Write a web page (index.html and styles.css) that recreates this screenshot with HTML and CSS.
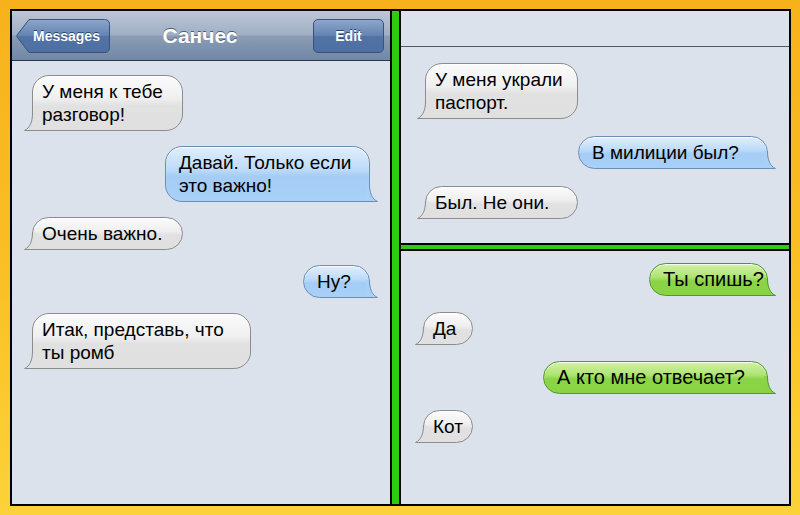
FILE: index.html
```html
<!DOCTYPE html>
<html lang="ru">
<head>
<meta charset="utf-8">
<title>Санчес</title>
<link rel="stylesheet" href="styles.css">
</head>
<body>
<svg class="defs" width="0" height="0" aria-hidden="true">
  <defs>
    <linearGradient id="btnGrad" x1="0" y1="0" x2="0" y2="1">
      <stop offset="0" stop-color="#8ea6c9"/>
      <stop offset="0.5" stop-color="#6283b2"/>
      <stop offset="0.5" stop-color="#5173a6"/>
      <stop offset="1" stop-color="#4d6fa2"/>
    </linearGradient>
  </defs>
</svg>
<div class="frame">
  <section class="phone phone-left">
    <header class="navbar">
      <a class="back-btn">
        <svg class="back-shape" width="94" height="34" viewBox="0 0 94 34"><path d="M13 0.5 H88.5 Q93.5 0.5 93.5 5.5 V28.5 Q93.5 33.5 88.5 33.5 H13 L1.3 18.3 Q0.5 17 1.3 15.7 Z" fill="url(#btnGrad)" stroke="#37527c" stroke-width="1"/></svg>
        <span class="btn-label">Messages</span>
      </a>
      <h1 class="nav-title">Санчес</h1>
      <a class="edit-btn">Edit</a>
    </header>
    <div class="thread thread-left">
      <div class="bubble in gray w151"><span class="txt">У меня к тебе<br>разговор!</span><svg class="tail" viewBox="0 0 12 22"><path class="tf" d="M8.5 4 C8.5 13 6 19 0.5 21.8 L12 22 L12 4 Z"/><path class="ts" d="M8.5 4 C8.5 13 6 19 0.5 21.5 L12 21.5"/></svg></div>
      <div class="bubble out blue w205"><span class="txt">Давай. Только если<br>это важно!</span><svg class="tail" viewBox="0 0 12 22"><path class="tf" d="M8.5 4 C8.5 13 6 19 0.5 21.8 L12 22 L12 4 Z"/><path class="ts" d="M8.5 4 C8.5 13 6 19 0.5 21.5 L12 21.5"/></svg></div>
      <div class="bubble in gray w151"><span class="txt">Очень важно.</span><svg class="tail" viewBox="0 0 12 22"><path class="tf" d="M8.5 4 C8.5 13 6 19 0.5 21.8 L12 22 L12 4 Z"/><path class="ts" d="M8.5 4 C8.5 13 6 19 0.5 21.5 L12 21.5"/></svg></div>
      <div class="bubble out blue w67"><span class="txt">Ну?</span><svg class="tail" viewBox="0 0 12 22"><path class="tf" d="M8.5 4 C8.5 13 6 19 0.5 21.8 L12 22 L12 4 Z"/><path class="ts" d="M8.5 4 C8.5 13 6 19 0.5 21.5 L12 21.5"/></svg></div>
      <div class="bubble in gray w219"><span class="txt">Итак, представь, что<br>ты ромб</span><svg class="tail" viewBox="0 0 12 22"><path class="tf" d="M8.5 4 C8.5 13 6 19 0.5 21.8 L12 22 L12 4 Z"/><path class="ts" d="M8.5 4 C8.5 13 6 19 0.5 21.5 L12 21.5"/></svg></div>
    </div>
  </section>
  <div class="right-col">
    <section class="phone phone-rt">
      <div class="blank-bar"></div>
      <div class="thread thread-rt">
        <div class="bubble in gray w153"><span class="txt">У меня украли<br>паспорт.</span><svg class="tail" viewBox="0 0 12 22"><path class="tf" d="M8.5 4 C8.5 13 6 19 0.5 21.8 L12 22 L12 4 Z"/><path class="ts" d="M8.5 4 C8.5 13 6 19 0.5 21.5 L12 21.5"/></svg></div>
        <div class="bubble out blue w190"><span class="txt">В милиции был?</span><svg class="tail" viewBox="0 0 12 22"><path class="tf" d="M8.5 4 C8.5 13 6 19 0.5 21.8 L12 22 L12 4 Z"/><path class="ts" d="M8.5 4 C8.5 13 6 19 0.5 21.5 L12 21.5"/></svg></div>
        <div class="bubble in gray w153"><span class="txt">Был. Не они.</span><svg class="tail" viewBox="0 0 12 22"><path class="tf" d="M8.5 4 C8.5 13 6 19 0.5 21.8 L12 22 L12 4 Z"/><path class="ts" d="M8.5 4 C8.5 13 6 19 0.5 21.5 L12 21.5"/></svg></div>
      </div>
    </section>
    <section class="phone phone-rb">
      <div class="thread thread-rb">
        <div class="bubble out green w119"><span class="txt">Ты спишь?</span><svg class="tail" viewBox="0 0 12 22"><path class="tf" d="M8.5 4 C8.5 13 6 19 0.5 21.8 L12 22 L12 4 Z"/><path class="ts" d="M8.5 4 C8.5 13 6 19 0.5 21.5 L12 21.5"/></svg></div>
        <div class="bubble in gray w50"><span class="txt">Да</span><svg class="tail" viewBox="0 0 12 22"><path class="tf" d="M8.5 4 C8.5 13 6 19 0.5 21.8 L12 22 L12 4 Z"/><path class="ts" d="M8.5 4 C8.5 13 6 19 0.5 21.5 L12 21.5"/></svg></div>
        <div class="bubble out green w225"><span class="txt">А кто мне отвечает?</span><svg class="tail" viewBox="0 0 12 22"><path class="tf" d="M8.5 4 C8.5 13 6 19 0.5 21.8 L12 22 L12 4 Z"/><path class="ts" d="M8.5 4 C8.5 13 6 19 0.5 21.5 L12 21.5"/></svg></div>
        <div class="bubble in gray w50"><span class="txt">Кот</span><svg class="tail" viewBox="0 0 12 22"><path class="tf" d="M8.5 4 C8.5 13 6 19 0.5 21.8 L12 22 L12 4 Z"/><path class="ts" d="M8.5 4 C8.5 13 6 19 0.5 21.5 L12 21.5"/></svg></div>
      </div>
    </section>
  </div>
</div>
</body>
</html>
```

FILE: styles.css
```css
html, body {
  margin: 0;
}

body {
  width: 800px;
  height: 515px;
  overflow: hidden;
  padding-top: 9px;
  box-sizing: border-box;
  background: linear-gradient(180deg, #f7b21b 0%, #f9bd22 45%, #fbc92d 75%, #fcd23a 100%);
  font-family: "Liberation Sans", Arial, sans-serif;
}

.defs {
  position: absolute;
  width: 0;
  height: 0;
}

.frame {
  box-sizing: border-box;
  margin-left: 10px;
  width: 781px;
  height: 497px;
  border: 2px solid #000;
  background: #2fcb12;
  display: flex;
  gap: 7px;
}

.phone {
  background: #dbe2ec;
  box-sizing: border-box;
  display: flex;
  flex-direction: column;
}

.phone-left {
  width: 380px;
  border-right: 2px solid #000;
}

.right-col {
  flex: 1;
  display: flex;
  flex-direction: column;
  gap: 4px;
  border-left: 2px solid #000;
}

.phone-rt {
  height: 234px;
  border-bottom: 2px solid #000;
}

.phone-rb {
  flex: 1;
  border-top: 2px solid #000;
}

/* nav bar */
.navbar {
  box-sizing: border-box;
  height: 50px;
  border-bottom: 1px solid #2b384a;
  background: linear-gradient(180deg, #bcc7d6 0%, #a0afc4 48%, #8a9cb5 52%, #7087a5 100%);
  display: grid;
  grid-template-columns: 1fr auto 1fr;
  align-items: center;
  padding: 0 6px 0 4px;
}

.nav-title {
  margin: 0;
  font-size: 21px;
  font-weight: bold;
  color: #fff;
  text-shadow: 0 -1px 0 #4b5c77;
}

.back-btn {
  justify-self: start;
  position: relative;
  box-sizing: border-box;
  width: 94px;
  height: 34px;
  display: flex;
  align-items: center;
  padding-left: 17px;
  color: #fff;
  font-size: 14px;
  font-weight: bold;
  text-shadow: 0 -1px 0 #2e4468;
}

.back-shape {
  position: absolute;
  left: 0;
  top: 0;
}

.btn-label {
  position: relative;
}

.edit-btn {
  justify-self: end;
  box-sizing: border-box;
  width: 71px;
  height: 34px;
  border: 1px solid #37527c;
  border-radius: 5px;
  background: linear-gradient(180deg, #8ea6c9 0%, #6283b2 50%, #5173a6 50%, #4d6fa2 100%);
  color: #fff;
  font-size: 14px;
  font-weight: bold;
  text-shadow: 0 -1px 0 #2e4468;
  display: flex;
  align-items: center;
  justify-content: center;
}

.blank-bar {
  box-sizing: border-box;
  height: 36px;
  border-bottom: 1px solid #4f5967;
}

/* threads */
.thread {
  display: flex;
  flex-direction: column;
  align-items: flex-start;
}

.thread-left {
  padding: 14px 20px 0 20px;
  gap: 15px;
}

.thread-rt {
  padding: 16px 21px 0 24px;
  gap: 17px;
}

.thread-rb {
  padding: 12px 21px 0 22px;
  gap: 16px;
}

/* bubbles */
.bubble {
  position: relative;
  box-sizing: border-box;
  font-size: 19px;
  line-height: 23px;
  color: #000;
  border: 1px solid var(--edge);
  border-radius: 17px;
  padding: 4px 0 4px 9px;
  white-space: nowrap;
  box-shadow: inset 0 1px 1px rgba(255, 255, 255, 0.8);
}

.txt {
  position: relative;
  z-index: 1;
}

.bubble.in {
  border-bottom-left-radius: 0;
}

.bubble.out {
  align-self: flex-end;
  border-bottom-right-radius: 0;
  padding-left: 13px;
}

.bubble.green {
  font-size: 20px;
  padding-left: 13px;
}

.w50 { width: 50px; }
.w67 { width: 67px; }
.w119 { width: 119px; }
.w151 { width: 151px; }
.w153 { width: 153px; }
.w190 { width: 190px; padding-left: 14px; }
.w205 { width: 205px; }
.w219 { width: 219px; }
.w225 { width: 225px; }

.gray {
  --edge: #8c8c8c;
  --tail: #e0e0e0;
  background: linear-gradient(180deg, #fbfbfb 0%, #efefef 42%, #e1e1e1 55%, #e0e0e0 100%);
}

.blue {
  --edge: #6b8fb4;
  --tail: #a9d0f7;
  background: linear-gradient(180deg, #e0eefc 0%, #bddbf9 42%, #a4ccf5 55%, #a9d0f7 100%);
}

.green {
  --edge: #4d9a2b;
  --tail: #88d443;
  background: linear-gradient(180deg, #d3f1a6 0%, #ade472 42%, #8cd447 55%, #88d443 100%);
}

.tail {
  position: absolute;
  bottom: -1px;
  width: 12px;
  height: 22px;
  overflow: visible;
}

.in .tail {
  left: -9px;
}

.out .tail {
  right: -9px;
  transform: scaleX(-1);
}

.tail .tf {
  fill: var(--tail);
}

.tail .ts {
  fill: none;
  stroke: var(--edge);
  stroke-width: 1;
}
```
